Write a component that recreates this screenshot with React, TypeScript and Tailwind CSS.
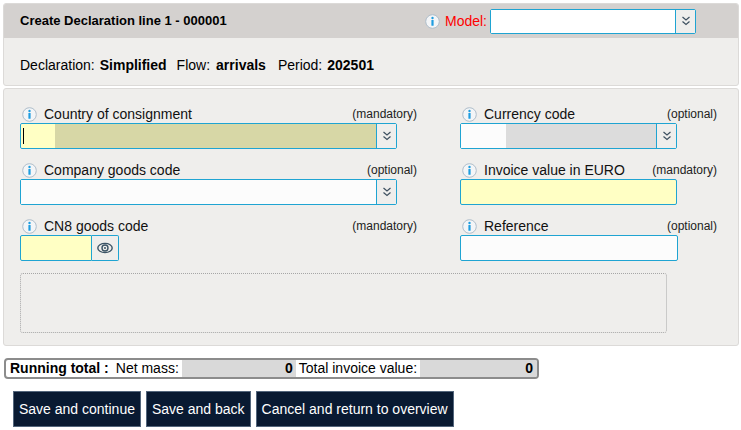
function InfoIcon() {
  return (
    <svg width="15" height="15" viewBox="0 0 15 15" className="shrink-0">
      <circle cx="7.5" cy="7.5" r="6.8" fill="#f3f5f7" stroke="#aebdca" strokeWidth="1" />
      <circle cx="7.5" cy="4" r="1.2" fill="#1f9de0" />
      <rect x="6.4" y="6" width="2.2" height="5.8" rx="0.5" fill="#1f9de0" />
    </svg>
  )
}

function Chevrons() {
  return (
    <svg width="10" height="12" viewBox="0 0 10 12">
      <path d="M1.5 2l3.5 3 3.5-3M1.5 6.5l3.5 3 3.5-3" stroke="#3e5060" strokeWidth="1.2" fill="none" />
    </svg>
  )
}

function EyeIcon() {
  return (
    <svg width="16" height="12" viewBox="0 0 16 12">
      <ellipse cx="8" cy="6" rx="7.2" ry="4.6" fill="none" stroke="#3c5466" strokeWidth="1.4" />
      <circle cx="8" cy="6" r="3" fill="none" stroke="#3c5466" strokeWidth="1.4" />
      <circle cx="8" cy="6" r="1" fill="#3c5466" />
    </svg>
  )
}

function Label({ text, note }: { text: string; note: string }) {
  return (
    <div className="flex items-center h-[18px]">
      <div className="w-[24px] pl-[2px]">
        <InfoIcon />
      </div>
      <span className="text-[14px] text-[#111]">{text}</span>
      <span className="ml-auto text-[12px] text-[#222]">{note}</span>
    </div>
  )
}

function SelectButton() {
  return (
    <div className="w-[20px] border-l border-[#1fa4d2] flex items-center justify-center bg-[#efeeec]">
      <Chevrons />
    </div>
  )
}

export default function App() {
  return (
    <div className="w-[741px] h-[430px] overflow-hidden bg-white text-black font-['Liberation_Sans',Arial,sans-serif]">
      <div className="pt-[3px] px-[3px]">
        {/* Title panel */}
        <div className="w-[736px] border border-[#dcdad8] rounded-[3px] bg-[#efeeec] overflow-hidden">
          <div className="h-[34px] bg-[#d4d1cf] flex items-center pl-[16px] pr-[42px]">
            <span className="text-[13px] font-bold">Create Declaration line 1 - 000001</span>
            <div className="ml-auto flex items-center">
              <InfoIcon />
              <span className="ml-[5px] mr-[3px] text-[14px] text-[#ff0000]">Model:</span>
              <div className="flex h-[25px] w-[206px] border border-[#1fa4d2] rounded-[2px] bg-white">
                <div className="flex-1 bg-white" />
                <SelectButton />
              </div>
            </div>
          </div>
          <div className="h-[47px] flex items-center pl-[16px] pt-[7px] text-[14px]">
            Declaration: <b className="ml-[5px]">Simplified</b>
            <span className="ml-[10px]">Flow:</span> <b className="ml-[6px]">arrivals</b>
            <span className="ml-[12px]">Period:</span> <b className="ml-[5px]">202501</b>
          </div>
        </div>

        {/* Form panel */}
        <div className="mt-[2px] w-[736px] border border-[#dcdad8] rounded-[3px] bg-[#efeeec] pt-[16px] pl-[16px] pb-[12px]">
          <div className="flex gap-[43px]">
            {/* Left column */}
            <div className="w-[397px] flex flex-col gap-[12px]">
              <div>
                <Label text="Country of consignment" note="(mandatory)" />
                <div className="flex h-[26px] w-[377px] border border-[#1fa4d2] rounded-[2px]">
                  <div className="w-[34px] bg-[#ffffc4] rounded-l-[2px] flex items-center pl-[2px]">
                    <div className="w-[1px] h-[16px] bg-black" />
                  </div>
                  <div className="flex-1 bg-[#d7d7a6]" />
                  <SelectButton />
                </div>
              </div>
              <div>
                <Label text="Company goods code" note="(optional)" />
                <div className="flex h-[26px] w-[377px] border border-[#1fa4d2] rounded-[2px]">
                  <div className="flex-1 bg-[#fcfcfc]" />
                  <SelectButton />
                </div>
              </div>
              <div>
                <Label text="CN8 goods code" note="(mandatory)" />
                <div className="flex h-[26px]">
                  <div className="w-[72px] bg-[#ffffc4] border border-[#1fa4d2] rounded-l-[2px]" />
                  <div className="w-[27px] border border-l-0 border-[#1fa4d2] rounded-r-[2px] flex items-center justify-center">
                    <EyeIcon />
                  </div>
                </div>
              </div>
            </div>

            {/* Right column */}
            <div className="w-[257px] flex flex-col gap-[12px]">
              <div>
                <Label text="Currency code" note="(optional)" />
                <div className="flex h-[26px] w-[217px] border border-[#1fa4d2] rounded-[2px]">
                  <div className="w-[45px] bg-[#fcfcfc]" />
                  <div className="flex-1 bg-[#dcdcdc]" />
                  <SelectButton />
                </div>
              </div>
              <div>
                <Label text="Invoice value in EURO" note="(mandatory)" />
                <div className="h-[26px] w-[217px] border border-[#1fa4d2] rounded-[2px] bg-[#ffffc4]" />
              </div>
              <div>
                <Label text="Reference" note="(optional)" />
                <div className="h-[26px] w-[218px] border border-[#1fa4d2] rounded-[2px] bg-[#fcfcfc]" />
              </div>
            </div>
          </div>

          <div className="mt-[12px] h-[60px] w-[647px] border border-dotted border-[#a6a6a6] rounded-[3px]" />
        </div>

        {/* Running total */}
        <div className="mt-[12px] ml-[1px] w-[535px] h-[21px] border-2 border-[#8c8c8c] rounded-[4px] flex items-center text-[14px] overflow-hidden">
          <b className="pl-[4px] pr-[7px]">Running total :</b>
          <span className="pr-[3px]">Net mass:</span>
          <div className="w-[114px] h-full bg-[#d9d9d9] flex items-center justify-end pr-[3px] font-bold">0</div>
          <span className="px-[3px]">Total invoice value:</span>
          <div className="flex-1 h-full bg-[#d9d9d9] flex items-center justify-end pr-[4px] font-bold">0</div>
        </div>

        {/* Buttons */}
        <div className="mt-[12px] ml-[10px] flex gap-[5px]">
          {["Save and continue", "Save and back", "Cancel and return to overview"].map((label) => (
            <button
              key={label}
              className="h-[36px] px-[5px] bg-[#091a32] border border-[#53667c] text-white text-[14px]"
            >
              {label}
            </button>
          ))}
        </div>
      </div>
    </div>
  )
}
